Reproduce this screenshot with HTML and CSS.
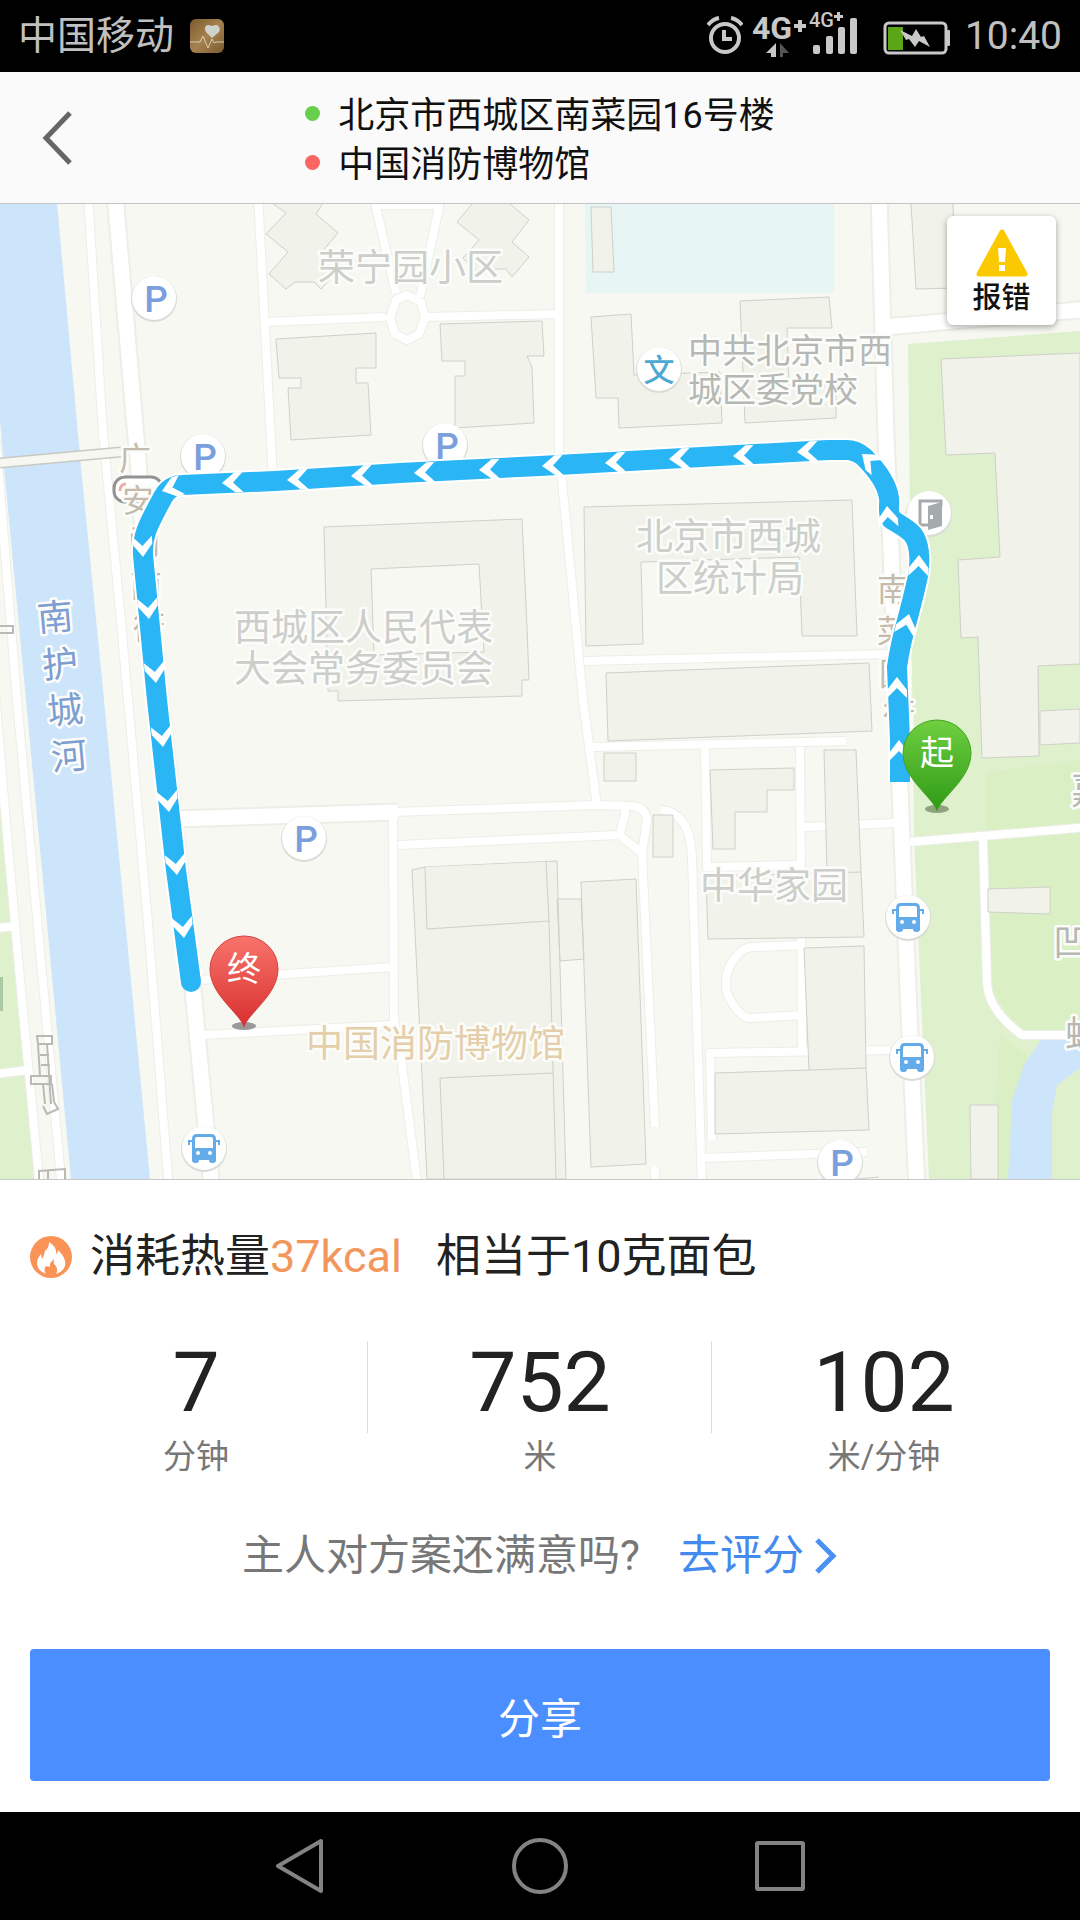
FILE: index.html
```html
<!DOCTYPE html>
<html lang="zh-CN">
<head>
<meta charset="utf-8">
<meta name="viewport" content="width=device-width, initial-scale=1">
<title>步行路线</title>
<link rel="stylesheet" href="styles.css">
</head>
<body>
<div class="screen">
  <div class="status">
    <span class="carrier">中国移动</span>
    <svg class="health" viewBox="0 0 34 34" width="34" height="34" aria-hidden="true">
      <defs><linearGradient id="gold" x1="0" y1="0" x2="1" y2="1"><stop offset="0" stop-color="#7c5a2b"/><stop offset=".5" stop-color="#a5824f"/><stop offset="1" stop-color="#7a5a2e"/></linearGradient></defs>
      <rect width="34" height="34" rx="6" fill="url(#gold)"/>
      <path d="M22 19l-6-6c-2-3-1-7 2-7 2 0 3 1 4 1s2-1 4-1c3 0 5 4 3 7z" fill="#ced2cb"/>
      <path d="M0 23h10l3-6 5 12 4-9 2 4 2-1h8" fill="none" stroke="#d8cdb8"/>
    </svg>
    <div class="indicators">
      <svg viewBox="0 0 36 40" width="36" height="40" fill="none" stroke="#c8c8c8" stroke-width="4" aria-hidden="true">
        <circle cx="18" cy="22" r="14"/><path d="M17 14v9h8M1 9q5-6 11-7M35 9q-5-6-11-7"/>
      </svg>
      <svg class="signal" viewBox="0 -12 107 72" width="107" height="72" fill="#c8c8c8" aria-hidden="true">
        <text x="0" y="27" class="net-big">4G</text><path d="M46 8h4v4h4v4h-4v4h-4v-4h-4v-4h4z"/>
        <text x="57" y="15" class="net-small">4G</text><path d="M85 0h3v3h3v3h-3v3h-3v-3h-3v-3h3z"/>
        <path d="M24 31v14h-5v-4h-5z"/><path d="M28 31v14h3v-4h6z" fill="#555"/>
        <rect x="61" y="33" width="7" height="9" rx="2"/><rect x="74" y="24" width="7" height="18" rx="2"/><rect x="86" y="15" width="7" height="27" rx="2"/><rect x="98" y="6" width="7" height="36" rx="2"/>
      </svg>
      <svg class="battery" viewBox="0 0 68 34" width="68" height="34" aria-hidden="true">
        <rect x="2" y="2" width="61" height="30" rx="4" fill="none" stroke="#c8c8c8" stroke-width="3"/>
        <rect x="64" y="9" width="3" height="16" rx="1" fill="#c8c8c8"/>
        <rect x="5" y="6" width="15" height="23" fill="#5ba617"/>
        <path d="M17 9l12 6 4-7 5 8 3-1 6 11-11-6-4 6-6-8-3 1z" fill="#c8c8c8"/>
      </svg>
      <span class="clock">10:40</span>
    </div>
  </div>

  <header class="header">
    <button class="back" aria-label="返回"><svg viewBox="0 0 32 56" width="32" height="56"><path d="M28 3L4 28l24 25" fill="none" stroke="#666" stroke-width="5"/></svg></button>
    <div class="places">
      <div class="place"><i class="dot dot-start"></i><span>北京市西城区南菜园16号楼</span></div>
      <div class="place"><i class="dot dot-end"></i><span>中国消防博物馆</span></div>
    </div>
    <span></span>
  </header>

  <main>
    <div class="map">
      <svg class="map-art" viewBox="0 204 1080 975" role="img" aria-label="步行路线地图">
        <defs>
          <g id="thin">
            <path d="M-4 440L17 700 62 1190M-4 705L9 857 21 990 40 1190M-4 928L17 926M-4 1074L28 1070"/>
            <path d="M88 195L103 433 119 600 128 700 148 923 169 1190M258 195L273 480"/>
            <path d="M264 322L386 317M427 317L558 314M559 195V470M561 470L583 700 597 806"/>
            <path d="M376 195V207L396 293M439 195V207L420 297M376 205H439M407 295L421 302 425 318 419 334 407 340 395 334 390 318 396 300z"/>
            <path d="M393 812L540 807 595 805 632 806Q646 807 647 820L642 853 655 1127M398 845L619 835 642 853M626 810L620 833M655 1167V1190"/>
            <path d="M393 810L394 1020 401 1057 418 1190M199 980L393 967M203 1035L393 1025"/>
            <path d="M584 661L888 654M592 747L846 741M705 747L707 867 798 865M800 747L802 1050M803 827L895 823"/>
            <path d="M661 810Q690 812 692 857L702 1190M805 945L752 947Q738 948 728 970L726 978V990Q734 1012 748 1018L805 1015"/>
            <path d="M712 1140L710 1053 890 1050M704 1158L867 1152"/>
            <path d="M910 842L1090 827M983 840L987 983Q988 1010 1022 1035H1090"/>
          </g>
          <g id="wide">
            <path d="M115 195L138 460 145 567 193 990 212 1190M879 195L886 437 891 550 900 790 908 990 917 1190"/>
            <path d="M885 327L1090 309M172 819L398 812"/>
          </g>
          <path id="route" d="M900 782V740L897 667Q900 645 908 617C916 585 921 570 919 553C917 532 908 530 891 519 C887 511 890 507 889 498C887 483 875 468 864 457Q856 450 846 450H828L540 466 400 473 275 481 182 485Q170 485 163 497C148 525 142 535 143 555L157 700 176 870 191 982"/>
          <path id="arrow" d="M0 0L13-10h8L11 0 21 10H13z"/>
          <g id="badge"><circle cy="1" r="23" fill="#d9dbd5"/><circle r="22" fill="#fff"/></g>
          <g id="bus"><use href="#badge"/><path d="M-15-3v-4h3M15-3v-4h-3" fill="none" stroke="#63abe9" stroke-width="2"/><path d="M-12-9Q-12-14-7-14H7Q12-14 12-9V12Q12 15 9 15H8Q5 15 5 12H-5Q-5 15-8 15H-9Q-12 15-12 12zM-9-9V0H9V-9Q9-11 7-11H-7Q-9-11-9-9z" fill="#63abe9" fill-rule="evenodd"/><circle cx="-6" cy="5" r="2" fill="#fff"/><circle cx="6" cy="5" r="2" fill="#fff"/></g>
          <path id="pin-shape" d="M0 58C-4 44-34 26-34 0A34 33 0 0 1 34 0C34 26 4 44 0 58z"/>
          <linearGradient id="red" x1="0" y1="0" x2="0" y2="1"><stop offset="0" stop-color="#f8746b"/><stop offset="1" stop-color="#d82f2f"/></linearGradient>
          <linearGradient id="green" x1="0" y1="0" x2="0" y2="1"><stop offset="0" stop-color="#6fcf40"/><stop offset="1" stop-color="#2f9a17"/></linearGradient>
        </defs>

        <rect y="203" width="1080" height="976" fill="#f6f8f1"/>
        <g class="park">
          <path d="M0 690L10 923 24 1073 37 1179H0zM908 344L1080 331V1179H929L914 840z"/>
          <path class="park-deep" d="M986 772L1080 760V1035H1022L987 983zM1000 1035L1029 1057 1012 1100 1008 1179H990z"/>
          <path class="park-box" d="M0 977H3V1011H0z"/>
        </g>
        <g class="water">
          <path d="M0 203H57L81 467 104 700 150 1179H71L26 700 4 467 0 420zM1041 1040H1080V1068L1057 1085 1052 1113V1179H1008L1012 1100 1024 1065z"/>
          <path class="pool" d="M585 203H834V293H586z"/>
        </g>
        <use href="#thin" class="road-case thin"/>
        <use href="#wide" class="road-case wide"/>
        <use href="#thin" class="road thin"/>
        <use href="#wide" class="road wide"/>
        <path d="M0 463L121 452" stroke="#c9c9c1" stroke-width="11"/><path d="M0 463L121 452" stroke="#f6f7f1" stroke-width="8"/>

        <g class="building">
          <path d="M272 203L286 213 266 234 288 252 269 274 286 289 295 282H314L321 289 335 274 322 252 338 233 316 214 323 203zM473 203L457 222 479 240 463 258 480 275 496 269H506L512 277 529 257 512 242 529 220 509 203z"/>
          <path d="M276 339L376 333V368H356V383H368L371 435 291 440 288 388H301V378H279zM440 324L542 321 544 356H527L532 367 534 423 455 428V376H465V361H442z"/>
          <path fill-rule="evenodd" d="M324 527L522 519 527 627 529 680H522V696L338 701V691H328zM371 569L374 655 484 652 479 564z"/>
          <path d="M591 207H611L614 272H593zM591 317L631 314 634 375 720 372 722 423 619 428 618 398H596zM740 301L829 297 832 328H787L789 385H836V418L745 423z"/>
          <path d="M584 507L852 500 857 636H802L799 557 641 562 643 644 586 646zM606 673L869 663 872 731 608 741zM911 203H953L955 288 916 289z"/>
          <path d="M1080 353L941 359 946 455 995 453 1000 557 958 560 961 638 978 637 982 758 1039 756 1038 666 1080 664zM1040 711L1080 709V743L1040 745zM988 889L1050 887V914L988 912zM970 1105H998V1179H971z"/>
          <path d="M604 753H636V781H604zM710 770L794 768V790H767V812H735V849H713zM653 815H673V857H653z"/>
          <path d="M824 750H856L861 872 864 937 708 939 706 876 827 873zM804 948L864 946 866 1068 869 1130 715 1134V1073L809 1070zM809 1070L866 1068M827 873L861 872"/>
          <path d="M581 882L636 879 646 1164 591 1167zM557 899H581L584 959 560 961zM412 870L425 867 557 861 566 1179H427z"/>
          <path d="M425 867L427 929 549 921 546 862M549 921L556 1179M444 1179L440 1078 553 1073M857 1179L879 1177"/>
        </g>
        <g fill="none" stroke="#b9bab4" stroke-width="2">
          <path d="M0 626H13V633H0M37 1036h15v8H38zM38 1044l2 32M47 1044l4 60M40 1055h9M41 1065h9M31 1076h20v8H31zM43 1084l2 20M52 1084l2 18 4 7-11 5-4-8M39 1179V1171L65 1169V1179M48 1170V1179"/>
        </g>
        <rect x="114" y="477" width="48" height="25" rx="11" fill="#fff" stroke="#929292" stroke-width="3"/>
        <path d="M120 491q0-7 6-7" fill="none" stroke="#efaaaa" stroke-width="3"/>

        <g class="label road-name">
          <text x="135" y="470">广</text><text x="138" y="512">安</text><text x="144" y="554">门</text><text x="146" y="597">南</text><text x="149" y="639">街</text>
          <text x="893" y="601">南</text><text x="893" y="643">菜</text><text x="895" y="685">园</text><text x="899" y="726">街</text>
        </g>
        <use href="#badge" x="154" y="298"/><use href="#badge" x="203" y="456"/><use href="#badge" x="445" y="445"/><use href="#badge" x="304" y="838"/><use href="#badge" x="840" y="1162"/>
        <g class="parking"><text x="156" y="312">P</text><text x="205" y="470">P</text><text x="447" y="459">P</text><text x="306" y="852">P</text><text x="842" y="1176">P</text></g>
        <use href="#bus" x="204" y="1148"/><use href="#bus" x="908" y="917"/><use href="#bus" x="912" y="1057"/>
        <use href="#badge" x="659" y="369"/><text class="school" x="659" y="381">文</text>
        <use href="#badge" x="929" y="513"/><path d="M929 525H920V501H941V506" fill="none" stroke="#a5aaad" stroke-width="3"/><path fill-rule="evenodd" d="M928 506L942 502V526L928 530zM930 515V519H933V515z" fill="#a5aaad"/>

        <g class="label area">
          <text x="318" y="281">荣宁园小区</text>
          <text x="234" y="641">西城区人民代表</text><text x="234" y="682">大会常务委员会</text>
          <text x="636" y="550">北京市西城</text><text x="656" y="592">区统计局</text>
          <text x="700" y="899">中华家园</text>
        </g>
        <g class="label site">
          <text x="688" y="363">中共北京市西</text><text x="688" y="402">城区委党校</text>
        </g>
        <g class="label site edge">
          <text x="1071" y="804">嘉</text><text x="1053" y="956">凹</text><text x="1065" y="1048">蛙</text>
        </g>
        <text class="label museum" x="306" y="1057">中国消防博物馆</text>
        <g class="label river"><text x="55" y="630" transform="rotate(-5 55 617)">南</text><text x="60" y="677" transform="rotate(-5 60 664)">护</text><text x="65" y="723" transform="rotate(-5 65 710)">城</text><text x="69" y="769" transform="rotate(-5 69 756)">河</text></g>

        <use href="#route" class="route-case"/><use href="#route" class="route"/><circle cx="191" cy="982" r="10" fill="#2ab5f5"/>
        <g fill="#fff">
          <use href="#arrow" transform="translate(162 491) rotate(-18)"/><use href="#arrow" transform="translate(222 483) rotate(-3)"/><use href="#arrow" transform="translate(287 480) rotate(-3)"/><use href="#arrow" transform="translate(351 476) rotate(-3)"/><use href="#arrow" transform="translate(414 473) rotate(-3)"/><use href="#arrow" transform="translate(479 470) rotate(-3)"/><use href="#arrow" transform="translate(542 466) rotate(-3)"/><use href="#arrow" transform="translate(605 463) rotate(-3)"/><use href="#arrow" transform="translate(669 459) rotate(-3)"/><use href="#arrow" transform="translate(733 456) rotate(-3)"/><use href="#arrow" transform="translate(797 452) rotate(-3)"/><use href="#arrow" transform="translate(862 454) rotate(40)"/>
          <use href="#arrow" transform="translate(887 506) rotate(86)"/><use href="#arrow" transform="translate(919 555) rotate(92)"/><use href="#arrow" transform="translate(909 614) rotate(104)"/><use href="#arrow" transform="translate(897 677) rotate(90)"/><use href="#arrow" transform="translate(899 740) rotate(90)"/>
          <use href="#arrow" transform="translate(143 557) rotate(-93)"/><use href="#arrow" transform="translate(149 619) rotate(-95)"/><use href="#arrow" transform="translate(156 683) rotate(-96)"/><use href="#arrow" transform="translate(163 747) rotate(-96)"/><use href="#arrow" transform="translate(169 812) rotate(-96)"/><use href="#arrow" transform="translate(177 875) rotate(-96)"/><use href="#arrow" transform="translate(184 938) rotate(-96)"/>
        </g>
        <ellipse cx="244" cy="1026" rx="12" ry="4" fill="#999"/><use href="#pin-shape" x="244" y="969" fill="url(#red)" stroke="#d24340"/><text class="pin-text" x="244" y="981">终</text>
        <ellipse cx="937" cy="809" rx="12" ry="4" fill="#8fa381"/><use href="#pin-shape" x="937" y="753" fill="url(#green)" stroke="#42a41f"/><text class="pin-text" x="937" y="765">起</text>
      </svg>
      <button class="report">
        <svg viewBox="0 0 52 48" width="52" height="48" aria-hidden="true"><path d="M26 3L49 45H3z" fill="#fbc900" stroke="#fbc900" stroke-width="5" stroke-linejoin="round"/><path d="M22 19h8l-1 14h-6zM23 36h6v6h-6z" fill="#fff"/></svg>
        <span>报错</span>
      </button>
    </div>

    <section class="panel">
      <div class="calories">
        <svg viewBox="0 0 42 42" width="42" height="42" aria-hidden="true"><circle cx="21" cy="21" r="21" fill="#fb9256"/><path d="M19 6q8 5 7 12 2-1 2-4 9 9 7 16-2 6-9 8 3-5-1-9-2 0-1-6-5 4-4 8l-4-1q-3 4 0 8-8-3-9-10 0-6 4-10l1 5q2-3 3-8 4-3 4-9z" fill="#fff"/></svg>
        <p>消耗热量<span class="kcal">37kcal</span></p>
        <p class="equals">相当于10克面包</p>
      </div>
      <div class="stats">
        <div class="stat"><strong>7</strong><span>分钟</span></div>
        <div class="stat"><strong>752</strong><span>米</span></div>
        <div class="stat"><strong>102</strong><span>米/分钟</span></div>
      </div>
      <div class="rating">
        <span>主人对方案还满意吗?</span>
        <a href="#rate">去评分<svg viewBox="0 0 24 40" width="24" height="40" aria-hidden="true"><path d="M3 4L19 20 3 36" fill="none" stroke="#4a90f5" stroke-width="5"/></svg></a>
      </div>
      <button class="share">分享</button>
    </section>
  </main>

  <nav class="keys">
    <button aria-label="返回键"><svg viewBox="0 0 60 60" width="60" height="60"><path d="M51 5V55L8 30z"/></svg></button>
    <button aria-label="主页键"><svg viewBox="0 0 60 60" width="60" height="60"><circle cx="30" cy="30" r="26"/></svg></button>
    <button aria-label="最近任务键"><svg viewBox="0 0 60 60" width="60" height="60"><rect x="7" y="7" width="46" height="46" rx="1"/></svg></button>
  </nav>
</div>
</body>
</html>
```
FILE: styles.css
```css
* { box-sizing: border-box; }
body {
  margin: 0;
  background: #fff;
  color: #222;
  font-family: Roboto, "Noto Sans CJK SC", sans-serif;
}
button {
  margin: 0;
  padding: 0;
  border: 0;
  background: none;
  font-family: inherit;
  color: inherit;
}
svg { display: block; }
p { margin: 0; }

.screen {
  display: flex;
  flex-direction: column;
  min-height: 100vh;
}
main {
  flex: 1;
  display: flex;
  flex-direction: column;
}

.status {
  display: flex;
  align-items: center;
  height: 72px;
  padding: 0 18px;
  background: #000;
  color: #c0c0c0;
}
.carrier { font-size: 39px; line-height: 74px; }
.health { margin-left: 16px; }
.indicators {
  display: flex;
  align-items: center;
  margin-left: auto;
}
.signal { margin-left: 9px; }
.net-big { font: 700 32px "Roboto", sans-serif; }
.net-small { font: 500 20px "Roboto", sans-serif; }
.battery { margin: 3px 14px 0 24px; }
.clock { font-size: 39px; line-height: 74px; }

.header {
  display: grid;
  grid-template-columns: 1fr auto 1fr;
  align-items: center;
  height: 131px;
  background: #fafafa;
}
.back { justify-self: start; margin-left: 42px; }
.place {
  display: flex;
  align-items: center;
  gap: 18px;
  height: 49px;
  color: #111;
  font-size: 36px;
  line-height: 48px;
}
.place span { padding-top: 6px; }
.dot {
  width: 15px;
  height: 15px;
  border-radius: 50%;
}
.dot-start { background: #68cf4d; }
.dot-end { background: #fb6663; }

.map {
  position: relative;
  border-top: 1px solid #c4c4c4;
  border-bottom: 1px solid #c8c8c8;
  overflow: hidden;
}
.map-art { width: 100%; height: auto; }
.park { fill: #dff0cd; }
.park-deep { fill: #daf0c4; }
.park-box { fill: #abc9a6; }
.water { fill: #cde5fb; }
.pool { fill: #e8f5f5; }
.road, .road-case { fill: none; stroke-linejoin: round; }
.road { stroke: #fff; }
.road-case { stroke: #edeee7; }
.road.thin { stroke-width: 8px; }
.road-case.thin { stroke-width: 10px; }
.road.wide { stroke-width: 15px; }
.road-case.wide { stroke-width: 19px; }
.building { fill: #f1f2ea; stroke: #cfd0c9; stroke-width: 1px; }
.label {
  stroke: #fcfdfa;
  stroke-width: 5px;
  stroke-linejoin: round;
  paint-order: stroke;
}
.area { font-size: 37px; fill: #ccceca; }
.site { font-size: 34px; fill: #b6b8b4; }
.edge { font-size: 37px; }
.museum { font-size: 37px; fill: #e4cfaa; }
.river { font-size: 36px; fill: #7e9ed2; text-anchor: middle; }
.road-name { font-size: 32px; fill: #c4bbad; text-anchor: middle; }
.parking { font: 500 37px "Roboto", sans-serif; fill: #7b9fdc; text-anchor: middle; }
.school { font-size: 31px; font-weight: 500; fill: #4da9d2; text-anchor: middle; }
.route, .route-case { fill: none; stroke-linejoin: round; }
.route { stroke: #2ab5f5; stroke-width: 20px; }
.route-case { stroke: #fff; stroke-width: 24px; }
.pin-text { font-size: 34px; fill: #fff; text-anchor: middle; }

.report {
  position: absolute;
  top: 12px;
  right: 24px;
  display: flex;
  flex-direction: column;
  align-items: center;
  justify-content: center;
  gap: 2px;
  width: 109px;
  height: 109px;
  padding-top: 4px;
  border-radius: 6px;
  background: #fff;
  box-shadow: 0 2px 6px rgba(0, 0, 0, .35);
  color: #111;
  font-size: 29px;
  font-weight: 500;
  line-height: 38px;
}

.panel {
  flex: 1;
  display: flex;
  flex-direction: column;
  padding: 0 30px 31px;
}
.calories {
  display: flex;
  align-items: center;
  margin-top: 44px;
  font-size: 45px;
  line-height: 66px;
}
.calories p { margin-left: 18px; }
.calories .equals { margin-left: 34px; }
.kcal { color: #f2975c; }
.stats {
  display: grid;
  grid-template-columns: repeat(3, 1fr);
  margin: 51px -6px 0;
}
.stat {
  position: relative;
  display: flex;
  flex-direction: column;
  align-items: center;
}
.stat + .stat::before {
  content: "";
  position: absolute;
  left: -1px;
  top: 0;
  width: 1px;
  height: 92px;
  background: #dcdcdc;
}
.stat strong { font-size: 84px; font-weight: 400; line-height: 84px; }
.stat span { margin-top: 8px; color: #777; font-size: 33px; line-height: 48px; }
.rating {
  display: flex;
  align-items: center;
  justify-content: center;
  gap: 38px;
  margin-top: 43px;
  color: #777;
  font-size: 42px;
  line-height: 64px;
}
.rating a {
  display: flex;
  align-items: center;
  gap: 10px;
  color: #4389ee;
  text-decoration: none;
}
.share {
  height: 132px;
  margin-top: auto;
  border-radius: 4px;
  background: #4a8eff;
  color: #fff;
  font-size: 42px;
}

.keys {
  display: flex;
  align-items: center;
  justify-content: center;
  gap: 180px;
  height: 108px;
  background: #000;
}
.keys svg {
  fill: none;
  stroke: #838383;
  stroke-width: 4px;
  stroke-linejoin: round;
}
```
